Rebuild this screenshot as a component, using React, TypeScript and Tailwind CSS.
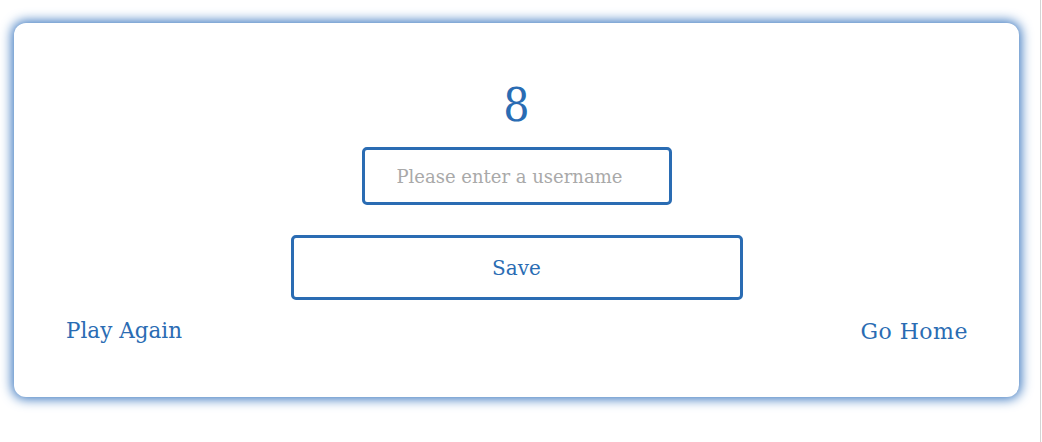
import React from "react";

const App = () => {
  return (
    <div
      className="w-[1041px] h-[442px] bg-white border-r border-[#d4d4d4] pt-[23px] pl-[14px]"
      style={{ fontFamily: '"DejaVu Serif", serif' }}
    >
      <div className="w-[1005px] h-[374px] bg-white rounded-[12px] shadow-[0_0_12px_2px_#3573bd] flex flex-col items-center text-[#2a6cb3]">
        <div className="mt-[53px] text-[46px] leading-[58px] font-stretch-condensed">8</div>
        <input
          type="text"
          placeholder="Please enter a username"
          className="mt-[13px] w-[310px] h-[58px] border-[3px] border-[#2a6cb3] rounded-[5px] pl-[32px] text-[18px] text-[#555] placeholder:text-[#a9a9a9] outline-none"
        />
        <button className="mt-[30px] w-[452px] h-[65px] border-[3px] border-[#2a6cb3] rounded-[5px] text-[20px] text-[#2a6cb3] bg-white">
          Save
        </button>
        <div className="w-full flex justify-between pl-[52px] pr-[51px] mt-[15px]">
          <a href="#play" className="text-[21.5px] text-[#2a6cb3]">
            Play Again
          </a>
          <a href="#home" className="text-[22px] tracking-[0.5px] text-[#2a6cb3]">
            Go Home
          </a>
        </div>
      </div>
    </div>
  );
};

export default App;
